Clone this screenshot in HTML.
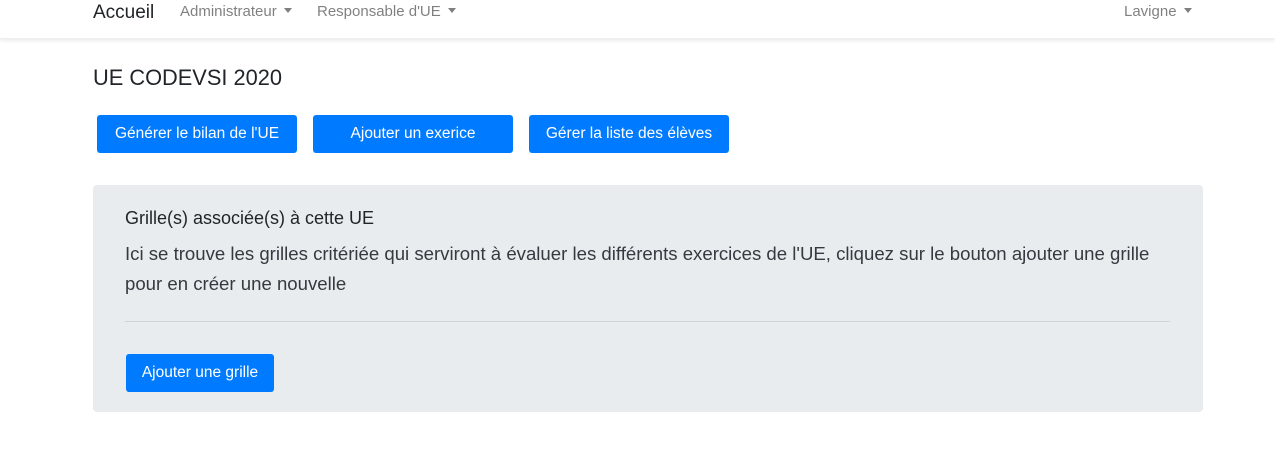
<!DOCTYPE html>
<html><head><style>
body{margin:0;width:1275px;height:449px;background:#fff;font-family:"Liberation Sans",sans-serif;color:#212529;position:relative;overflow:hidden}
.nav{position:absolute;left:0;top:0;width:1275px;height:38px;background:#fff;box-shadow:0 2px 4px rgba(0,0,0,.08);border-bottom:1px solid #eee}
.a{position:absolute;white-space:nowrap}
.brand{left:93px;top:2px;font-size:19px;color:#212529}
.ni{top:3px;font-size:15px;color:rgba(0,0,0,.5)}
.caret{display:inline-block;margin-left:7px;vertical-align:3px;border-top:5px solid rgba(0,0,0,.5);border-left:4.5px solid transparent;border-right:4.5px solid transparent}
.btn{position:absolute;background:#007bff;color:#fff;border-radius:3px;font-size:15.5px;text-align:center;line-height:38px;height:38px}
.jumbo{position:absolute;left:93px;top:185px;width:1110px;height:227px;background:#e9ecef;border-radius:4px}
</style></head><body>
<div class="nav"></div>
<div class="a brand">Accueil</div>
<div class="a ni" style="left:180px">Administrateur<span class="caret"></span></div>
<div class="a ni" style="left:317px">Responsable d'UE<span class="caret"></span></div>
<div class="a ni" style="left:1124px">Lavigne<span class="caret"></span></div>
<div class="a" style="left:93px;top:65px;font-size:21.8px">UE CODEVSI 2020</div>
<div class="btn" style="left:97px;top:115px;width:200px">Générer le bilan de l'UE</div>
<div class="btn" style="left:313px;top:115px;width:200px">Ajouter un exerice</div>
<div class="btn" style="left:529px;top:115px;width:200px">Gérer la liste des élèves</div>
<div class="jumbo"></div>
<div class="a" style="left:125px;top:208px;font-size:18px">Grille(s) associée(s) à cette UE</div>
<div class="a" style="left:125px;top:239px;font-size:18.6px;line-height:30px;white-space:normal;width:1045px;color:#343a40">Ici se trouve les grilles critériée qui serviront à évaluer les différents exercices de l'UE, cliquez sur le bouton ajouter une grille pour en créer une nouvelle</div>
<div class="a" style="left:125px;top:321px;width:1045px;height:1px;background:#ced4da"></div>
<div class="btn" style="left:126px;top:354px;width:148px">Ajouter une grille</div>
</body></html>
